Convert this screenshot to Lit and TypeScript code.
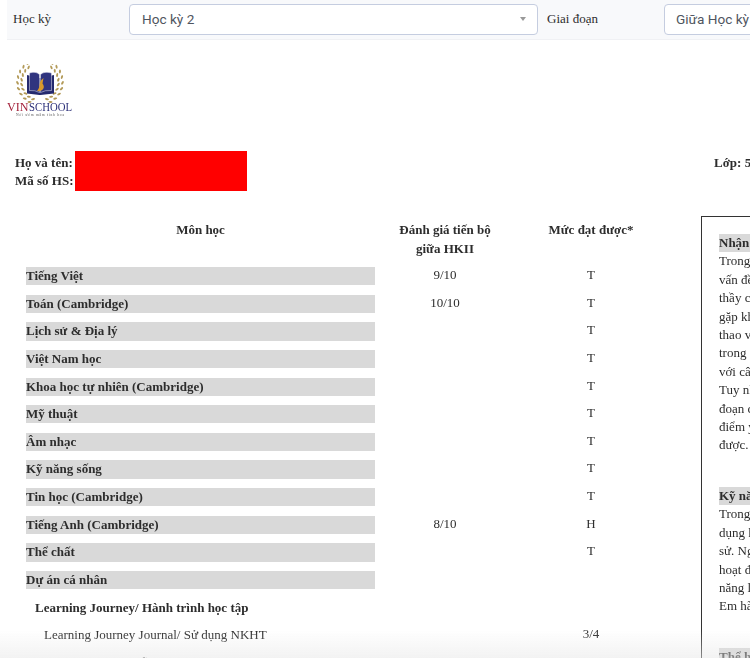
import { LitElement, html, css, svg } from "lit";
import { customElement } from "lit/decorators.js";

interface Row { name: string; score?: string; level?: string; kind: "subject" | "group" | "item"; }

const ROWS: Row[] = [
  { name: "Tiếng Việt", score: "9/10", level: "T", kind: "subject" },
  { name: "Toán (Cambridge)", score: "10/10", level: "T", kind: "subject" },
  { name: "Lịch sử & Địa lý", level: "T", kind: "subject" },
  { name: "Việt Nam học", level: "T", kind: "subject" },
  { name: "Khoa học tự nhiên (Cambridge)", level: "T", kind: "subject" },
  { name: "Mỹ thuật", level: "T", kind: "subject" },
  { name: "Âm nhạc", level: "T", kind: "subject" },
  { name: "Kỹ năng sống", level: "T", kind: "subject" },
  { name: "Tin học (Cambridge)", level: "T", kind: "subject" },
  { name: "Tiếng Anh (Cambridge)", score: "8/10", level: "H", kind: "subject" },
  { name: "Thể chất", level: "T", kind: "subject" },
  { name: "Dự án cá nhân", kind: "subject" },
  { name: "Learning Journey/ Hành trình học tập", kind: "group" },
  { name: "Learning Journey Journal/ Sử dụng NKHT", level: "3/4", kind: "item" },
  { name: "Reflection/ Suy ngẫm", level: "3/4", kind: "item" },
];

const NOTES = [
  { title: "Nhận xét", lines: ["Trong", "vấn đề", "thầy cô", "gặp khó", "thao và", "trong", "với câu", "Tuy nhiên", "đoạn cuối", "điểm yếu", "được."] },
  { title: "Kỹ năng", lines: ["Trong", "dụng kiến", "sử. Ngoài", "hoạt động", "năng làm", "Em hãy"] },
  { title: "Thể hiện", lines: [] as string[] },
];

@customElement("app-root")
export class AppRoot extends LitElement {
  static styles = css`
    :host { display: block; width: 750px; height: 658px; overflow: hidden; position: relative; background: #fff; font-family: "Liberation Serif", "Times New Roman", serif; color: #2d2d2d; }
    .page { filter: blur(0.35px); }
    .bar { display: flex; align-items: center; height: 40px; box-sizing: border-box; margin-left: 7px; padding: 4px 0 5px 6px; background: #f8f9fb; border-bottom: 1px solid #f0f1f4; white-space: nowrap; overflow: hidden; }
    .bar label { font-size: 13px; color: #2d2d2d; flex: none; }
    .l1 { width: 116px; }
    .l2 { width: 117px; margin-left: 9px; }
    .sel { flex: none; height: 31px; box-sizing: border-box; display: flex; align-items: center; justify-content: space-between; background: #fff; border: 1px solid #c5cde0; border-radius: 4px; padding: 0 11px 0 12px; font-family: Roboto, sans-serif; font-size: 13.6px; color: #4f5560; }
    .s1 { width: 409px; }
    .s2 { width: 200px; padding-left: 11px; }
    .caret { width: 0; height: 0; border-left: 3.5px solid transparent; border-right: 3.5px solid transparent; border-top: 4px solid #999; }
    .logo { display: block; margin: 24px 0 0 7px; }
    .info { display: flex; justify-content: space-between; height: 40px; margin-top: 33px; padding-left: 15px; font-size: 13px; font-weight: 700; line-height: 18px; }
    .info-left { display: flex; }
    .info-labels { padding-top: 3px; width: 60px; white-space: nowrap; }
    .redact { width: 172px; height: 40px; background: #f00; }
    .cls { padding-top: 3px; width: 36px; white-space: nowrap; overflow: hidden; }
    .body { display: flex; align-items: flex-start; padding-left: 26px; margin-top: 25px; font-size: 13px; }
    .table { flex: none; width: 675px; }
    .head { display: flex; font-weight: 700; line-height: 18.5px; height: 51px; padding-top: 5px; box-sizing: border-box; text-align: center; }
    .row { display: flex; height: 27.63px; }
    .c1 { flex: none; width: 349px; }
    .c2 { flex: none; width: 140px; text-align: center; }
    .c3 { flex: none; width: 152px; text-align: center; }
    .name { height: 18.3px; line-height: 17px; white-space: nowrap; }
    .subject .name { background: #d9d9d9; font-weight: 700; }
    .group .name { font-weight: 700; padding-left: 9px; }
    .item .name { padding-left: 18px; }
    .val { line-height: 16px; }
    .notes { flex: none; width: 100px; box-sizing: border-box; border: 1px solid #333; border-right: 0; padding: 17px 0 0 17px; height: 460px; overflow: hidden; line-height: 18.4px; white-space: nowrap; }
    .note { margin-bottom: 32px; }
    .note-title { background: #d9d9d9; font-weight: 700; }
    .fade { position: absolute; left: 0; right: 0; bottom: 0; height: 28px; background: linear-gradient(to bottom, rgba(230,230,230,0), rgba(230,230,230,.5)); pointer-events: none; }
  `;

  private logo() {
    const leaves: unknown[] = [];
    for (let i = 0; i < 9; i++) {
      const deg = -68 + i * 15;
      for (const side of [1, -1]) {
        for (const r of [18.5, 22.5]) {
          const t = (deg * Math.PI) / 180 + (r === 22.5 ? 0.1 : 0);
          const x = 40 + side * r * Math.cos(t);
          const y = 18 - r * Math.sin(t);
          const rot = side * (-(t * 180) / Math.PI - 60);
          leaves.push(svg`<ellipse cx=${x} cy=${y} rx="2" ry="1" fill="#b39a58" transform="rotate(${rot} ${x} ${y})"/>`);
        }
      }
    }
    return html`<svg class="logo" width="66" height="54" viewBox="7 0 66 54" aria-hidden="true">
      ${leaves}
      <path d="M27 11 L39.5 14 L40.5 14 L54 11 V29.5 L40.5 31 L39.5 31 L27 29.5 Z" fill="#252a6e"/>
      <path d="M29.5 9 Q36 7 39.5 10.5 V28.5 Q35 26 29.5 26.5 Z M51.5 9 Q44 7 40.5 10.5 V28.5 Q45 26 51.5 26.5 Z" fill="#30347f" stroke="#e9e9f2" stroke-width=".5"/>
      <path d="M43.5 14 C37 19 42 21 37 27 C42 28 46 24 42.5 19.5 Z" fill="#d99a2b"/>
      <text x="7" y="47" font-family="Liberation Serif, serif" font-size="11.5" fill="#a3213a" textLength="21.5" lengthAdjust="spacingAndGlyphs">VIN</text>
      <text x="29" y="47" font-family="Liberation Serif, serif" font-size="11.5" fill="#2b2f78" textLength="43" lengthAdjust="spacingAndGlyphs">SCHOOL</text>
      <text x="16" y="52" font-family="Liberation Serif, serif" font-size="3.6" fill="#555" textLength="48">Nơi ươm mầm tinh hoa</text>
    </svg>`;
  }

  render() {
    return html`
      <div class="page">
        <div class="bar">
          <label class="l1">Học kỳ</label>
          <div class="sel s1"><span>Học kỳ 2</span><span class="caret"></span></div>
          <label class="l2">Giai đoạn</label>
          <div class="sel s2"><span>Giữa Học kỳ 2</span><span class="caret"></span></div>
        </div>
        ${this.logo()}
        <div class="info">
          <div class="info-left">
            <div class="info-labels"><div>Họ và tên:</div><div>Mã số HS:</div></div>
            <div class="redact"></div>
          </div>
          <div class="cls">Lớp: 5A1</div>
        </div>
        <div class="body">
          <div class="table">
            <div class="head">
              <div class="c1">Môn học</div>
              <div class="c2">Đánh giá tiến bộ<br />giữa HKII</div>
              <div class="c3">Mức đạt được*</div>
            </div>
            ${ROWS.map((r) => html`
              <div class="row ${r.kind}">
                <div class="c1"><div class="name">${r.name}</div></div>
                <div class="c2 val">${r.score ?? ""}</div>
                <div class="c3 val">${r.level ?? ""}</div>
              </div>`)}
          </div>
          <div class="notes">
            ${NOTES.map((n) => html`<div class="note">
              <div class="note-title">${n.title}</div>
              ${n.lines.map((l) => html`<div>${l}</div>`)}
            </div>`)}
          </div>
        </div>
      </div>
      <div class="fade"></div>
    `;
  }
}
